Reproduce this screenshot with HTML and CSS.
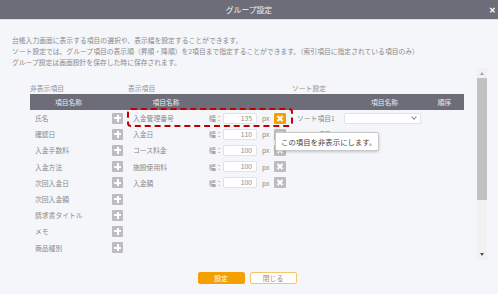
FILE: index.html
```html
<!DOCTYPE html>
<html lang="ja">
<head>
    <meta charset="UTF-8">
    <title>グループ設定</title>
    <link rel="stylesheet" href="styles.css">
</head>
<body>

<div class="titlebar">
    <span></span>
    <span class="title">グループ設定</span>
    <span class="close">✕</span>
</div>

<p class="desc">
    台帳入力画面に表示する項目の選択や、表示幅を設定することができます。<br>
    ソート設定では、グループ項目の表示順（昇順・降順）を2項目まで指定することができます。（索引項目に指定されている項目のみ）<br>
    グループ設定は画面設計を保存した時に保存されます。
</p>

<div class="scroll-area">
    <div class="content">
        <!-- 非表示項目 -->
        <div class="col col-hidden">
            <div class="col-label">非表示項目</div>
            <div class="col-head"><span class="head-name">項目名称</span></div>
            <div class="row"><span class="name">氏名</span><span class="btn-add"></span></div>
            <div class="row"><span class="name">確認日</span><span class="btn-add"></span></div>
            <div class="row"><span class="name">入金手数料</span><span class="btn-add"></span></div>
            <div class="row"><span class="name">入金方法</span><span class="btn-add"></span></div>
            <div class="row"><span class="name">次回入金日</span><span class="btn-add"></span></div>
            <div class="row"><span class="name">次回入金額</span><span class="btn-add"></span></div>
            <div class="row"><span class="name">請求書タイトル</span><span class="btn-add"></span></div>
            <div class="row"><span class="name">メモ</span><span class="btn-add"></span></div>
            <div class="row"><span class="name">商品種別</span><span class="btn-add"></span></div>
        </div>

        <!-- 表示項目 -->
        <div class="col col-shown">
            <div class="col-label">表示項目</div>
            <div class="col-head"><span class="head-name">項目名称</span></div>
            <div class="row highlight">
                <span class="name">入金管理番号</span>
                <span class="w-label">幅：</span><span class="w-input">135</span><span class="unit">px</span>
                <span class="btn-del active">
                    <span class="tooltip">この項目を非表示にします。</span>
                </span>
            </div>
            <div class="row">
                <span class="name">入金日</span>
                <span class="w-label">幅：</span><span class="w-input">110</span><span class="unit">px</span>
                <span class="btn-del"></span>
            </div>
            <div class="row">
                <span class="name">コース料金</span>
                <span class="w-label">幅：</span><span class="w-input">100</span><span class="unit">px</span>
                <span class="btn-del"></span>
            </div>
            <div class="row">
                <span class="name">施設使用料</span>
                <span class="w-label">幅：</span><span class="w-input">100</span><span class="unit">px</span>
                <span class="btn-del"></span>
            </div>
            <div class="row">
                <span class="name">入金額</span>
                <span class="w-label">幅：</span><span class="w-input">100</span><span class="unit">px</span>
                <span class="btn-del"></span>
            </div>
        </div>

        <!-- ソート設定 -->
        <div class="col col-sort">
            <div class="col-label">ソート設定</div>
            <div class="col-head">
                <span class="head-spacer"></span>
                <span class="head-item">項目名称</span>
                <span class="head-order">順序</span>
            </div>
            <div class="row">
                <span class="sort-label">ソート項目1</span>
                <span class="select"></span>
            </div>
            <div class="row">
                <span class="sort-label">ソート項目2</span>
            </div>
        </div>
    </div>

    <div class="scrollbar">
        <span class="arrow up"></span>
        <span class="thumb"></span>
        <span class="track"></span>
        <span class="arrow down"></span>
    </div>
</div>

<div class="actions">
    <button type="button" class="btn primary">設定</button>
    <button type="button" class="btn">閉じる</button>
</div>

</body>
</html>
```

FILE: styles.css
```css
body {
    margin: 0;
    font-family: "Noto Sans CJK JP", "Noto Sans", sans-serif;
    font-size: 6.8px;
    color: #8a8a8a;
    background-color: #f5f6fa;
}
.titlebar {
    height: 19px;
    background-color: #6d6d79;
    border-bottom: 1px solid #dcdde6;
    display: grid;
    grid-template-columns: 1fr auto 1fr;
    align-items: center;
    color: #f2f2f2;
}
.title {
    font-size: 7.8px;
}
.close {
    justify-self: end;
    margin-right: 2px;
    font-size: 8px;
    font-weight: bold;
    color: #fff;
}
.desc {
    margin: 0;
    padding: 15px 12px 0;
    line-height: 11px;
}
.scroll-area {
    display: flex;
    height: 192px;
    margin-right: 11px;
}
.content {
    flex: 1;
    display: flex;
    padding: 15px 0 0 30px;
}
.col {
    display: flex;
    flex-direction: column;
}
.col-hidden { width: 95px; }
.col-shown { width: 167px; }
.col-sort { width: 172px; }
.col-label {
    height: 11px;
    line-height: 11px;
    color: #939393;
}
.col-shown .col-label {
    padding-left: 3px;
}
.col-head {
    height: 16px;
    background-color: #6d6d79;
    color: #ececf0;
    display: flex;
    align-items: center;
}
.col-hidden .head-name {
    width: 77px;
    text-align: center;
}
.col-shown .head-name {
    width: 82px;
    text-align: center;
}
.head-spacer { width: 52px; }
.head-item { width: 81px; text-align: center; }
.head-order { width: 39px; text-align: center; }
.row {
    height: 16.2px;
    display: flex;
    align-items: center;
    position: relative;
}
.col-hidden .name {
    width: 72px;
    padding-left: 5px;
}
.btn-add {
    width: 11px;
    height: 11px;
    margin-left: 5px;
    border-radius: 1px;
    background-color: #bdbdbd;
    position: relative;
}
.btn-add::before,
.btn-add::after {
    content: "";
    position: absolute;
    background-color: #fff;
}
.btn-add::before {
    left: 2px;
    right: 2px;
    top: 4.5px;
    height: 2px;
}
.btn-add::after {
    top: 2px;
    bottom: 2px;
    left: 4.5px;
    width: 2px;
}
.col-shown .name {
    width: 74px;
    padding-left: 8px;
}
.w-label {
    width: 14px;
    padding-left: 2px;
}
.w-input {
    width: 34px;
    height: 11px;
    box-sizing: border-box;
    background-color: #fff;
    border: 1px solid #e2e3e8;
    border-radius: 2px;
    text-align: right;
    padding-right: 4px;
    line-height: 9px;
}
.unit {
    width: 12px;
    padding-left: 5px;
}
.btn-del {
    width: 12px;
    height: 11px;
    border-radius: 1px;
    background-color: #bdbdbd;
    position: relative;
}
.btn-del::before,
.btn-del::after {
    content: "";
    position: absolute;
    left: 5px;
    top: 2px;
    width: 2px;
    height: 7px;
    background-color: #fff;
}
.btn-del::before { transform: rotate(45deg); }
.btn-del::after { transform: rotate(-45deg); }
.btn-del.active {
    background-color: #f5a000;
}
.highlight::before {
    content: "";
    position: absolute;
    left: 2px;
    right: -1px;
    top: -2px;
    bottom: -1px;
    border: 2px dashed #c00000;
    border-radius: 4px;
}
.tooltip {
    position: absolute;
    left: 1px;
    top: 19px;
    width: 104px;
    height: 19px;
    box-sizing: border-box;
    padding-left: 5px;
    line-height: 17px;
    font-size: 7.4px;
    color: #444;
    white-space: nowrap;
    background-color: #fff;
    border: 1px solid #c8c8c8;
    border-radius: 2px;
    box-shadow: 0 1px 3px rgba(0, 0, 0, 0.2);
    z-index: 2;
}
.sort-label {
    width: 47px;
    padding-left: 5px;
}
.select {
    width: 77px;
    height: 11px;
    box-sizing: border-box;
    background-color: #fff;
    border: 1px solid #e2e3e8;
    border-radius: 2px;
    position: relative;
}
.select::after {
    content: "";
    position: absolute;
    right: 4px;
    top: 1px;
    width: 3px;
    height: 3px;
    border-right: 1px solid #888;
    border-bottom: 1px solid #888;
    transform: rotate(45deg);
}
.scrollbar {
    width: 10px;
    display: flex;
    flex-direction: column;
    background-color: #f1f1f1;
}
.arrow {
    height: 10px;
    display: flex;
    align-items: center;
    justify-content: center;
}
.arrow::before {
    content: "";
    border-left: 2.5px solid transparent;
    border-right: 2.5px solid transparent;
}
.arrow.up::before {
    border-bottom: 3px solid #a3a3a3;
}
.arrow.down::before {
    border-top: 3px solid #505050;
}
.arrow.down {
    margin-bottom: 1px;
}
.thumb {
    height: 122px;
    background-color: #c1c1c1;
}
.track {
    flex: 1;
}
.actions {
    display: flex;
    justify-content: center;
    gap: 5px;
    margin-top: 12px;
    padding-right: 4px;
}
.btn {
    width: 47px;
    height: 12px;
    padding: 0;
    font-family: inherit;
    font-size: 6.8px;
    color: #8a8a8a;
    background-color: #fff;
    border: 1px solid #f7c46a;
    border-radius: 2px;
}
.btn.primary {
    color: #fff;
    background-color: #f5a000;
    border-color: #f5a000;
}
```
